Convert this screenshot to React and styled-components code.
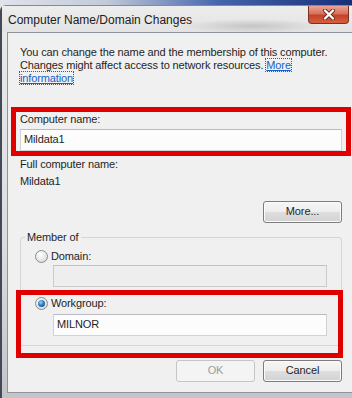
import React from "react";
import styled, { createGlobalStyle } from "styled-components";

const GlobalStyle = createGlobalStyle`
    body {
        margin: 0;
        font-family: "Liberation Sans", Arial, sans-serif;
    }
`;

const Screen = styled.div`
    width: 352px;
    height: 398px;
    overflow: hidden;
    display: flex;
    flex-direction: column;
    padding-top: 5px;
    box-sizing: border-box;
    background: linear-gradient(to right, #dfe3ea 0%, #c3cbd9 30%, #4565ad 62%, #162f78 100%);
`;

const Window = styled.div`
    flex: 1;
    display: flex;
    flex-direction: column;
    border-left: 2px solid #444a55;
    border-top: 1px solid #858b94;
    border-top-left-radius: 6px;
    background: linear-gradient(#e9e9ea 0%, #dcdddf 60%, #c2c4c7 100%);
`;

const TitleBar = styled.div`
    height: 26px;
    display: flex;
    align-items: flex-start;
    justify-content: space-between;
    padding-left: 6px;
    background:
        radial-gradient(ellipse 70px 7px at 250px 20px, rgba(110, 110, 110, 0.28), transparent),
        linear-gradient(#ededed, #e3e3e3);
`;

const Title = styled.div`
    margin-top: 6px;
    font-size: 12px;
    line-height: 16px;
    color: #202020;
`;

const CloseButton = styled.div`
    width: 41px;
    height: 18px;
    margin-right: 3px;
    box-sizing: border-box;
    display: flex;
    align-items: center;
    justify-content: center;
    border: 1px solid #7a3024;
    border-top: none;
    border-radius: 0 0 4px 4px;
    background: linear-gradient(#eaa597 0%, #d9705a 45%, #c2432b 55%, #d75f3f 100%);
`;

const Content = styled.div`
    flex: 1;
    display: flex;
    flex-direction: column;
    margin: 0 0 6px 5px;
    border-top: 1px solid #8e949b;
    border-left: 1px solid #8e949b;
    border-bottom: 1px solid #8e949b;
    background: #f0f0f0;
    padding: 13px 10px 10px 12px;
    font-size: 11px;
    line-height: 13px;
    letter-spacing: -0.12px;
    color: #1f1f1f;
`;

const Intro = styled.p`
    margin: 0;
    white-space: nowrap;
`;

const Link = styled.span`
    color: #1a5fc4;
    text-decoration: underline;
    border: 1px dotted #555;
    margin: -1px;
    -webkit-box-decoration-break: clone;
    box-decoration-break: clone;
`;

const Highlight = styled.div`
    display: flex;
    flex-direction: column;
    border: 5px solid #e00000;
    margin: ${(p) => p.margin};
    padding: ${(p) => p.padding};
`;

const Label = styled.div`
    margin-top: ${(p) => p.top || 0}px;
`;

const TextBox = styled.div`
    height: 22px;
    box-sizing: border-box;
    display: flex;
    align-items: center;
    padding-left: 3px;
    margin-top: ${(p) => p.top || 0}px;
    margin-left: ${(p) => (p.indent ? 18 : 0)}px;
    border: 1px solid ${(p) => (p.disabled ? "#c9cbcd" : "#cfd2d6")};
    border-top-color: ${(p) => (p.disabled ? "#bfc1c3" : "#b7bbc0")};
    background: ${(p) => (p.disabled ? "#eeeeee" : "#fcfcfc")};
    color: #1f1f1f;
`;

const Button = styled.div`
    width: 79px;
    height: 22px;
    box-sizing: border-box;
    display: flex;
    align-items: center;
    justify-content: center;
    border-radius: 3px;
    border: 1px solid ${(p) => (p.disabled ? "#c3c5c7" : "#7c7c7c")};
    background: ${(p) =>
        p.disabled
            ? "#f4f4f4"
            : "linear-gradient(#f6f6f6 0%, #eeeeee 48%, #dedede 52%, #d2d2d2 100%)"};
    color: ${(p) => (p.disabled ? "#9c9c9c" : "#1f1f1f")};
    box-shadow: inset 0 0 0 1px ${(p) => (p.disabled ? "transparent" : "#fbfbfb")};
`;

const MoreButton = styled(Button)`
    align-self: flex-end;
    margin-top: 12.5px;
`;

const GroupBox = styled.fieldset`
    margin: 8px 0 0;
    padding: 0;
    border: 1px solid #d3d6d9;
    border-radius: 3px;
    min-inline-size: 0;
`;

const Legend = styled.legend`
    margin-left: 4px;
    padding: 0 2px;
    font-size: 11px;
    line-height: 13px;
`;

const GroupBody = styled.div`
    display: flex;
    flex-direction: column;
    padding: 0 14px;
`;

const RadioRow = styled.div`
    display: flex;
    align-items: center;
    gap: 3px;
    height: 13px;
    margin-top: ${(p) => p.top || 0}px;
`;

const Radio = styled.span`
    width: 13px;
    height: 13px;
    box-sizing: border-box;
    border-radius: 50%;
    border: 1px solid #8a8c8e;
    background: radial-gradient(circle at 40% 35%, #ffffff 0%, #e6e6e6 55%, #cfcfcf 100%);
    display: flex;
    align-items: center;
    justify-content: center;
`;

const RadioDot = styled.span`
    width: 7px;
    height: 7px;
    border-radius: 50%;
    background: radial-gradient(circle at 40% 35%, #9fd2f5 0%, #2a7fc6 45%, #0d3f7a 100%);
`;

const ButtonRow = styled.div`
    display: flex;
    justify-content: flex-end;
    gap: 8px;
    margin-top: 14px;
`;

const CloseIcon = () => (
    <svg width="14" height="11" viewBox="0 0 14 11">
        <path d="M3 1.5 L11 9.5 M11 1.5 L3 9.5" stroke="#6a2418" strokeWidth="4" strokeLinecap="round" />
        <path d="M3 1.5 L11 9.5 M11 1.5 L3 9.5" stroke="#ffffff" strokeWidth="2.4" strokeLinecap="round" />
    </svg>
);

const App = () => {
    return (
        <>
            <GlobalStyle />
            <Screen>
                <Window>
                    <TitleBar>
                        <Title>Computer Name/Domain Changes</Title>
                        <CloseButton>
                            <CloseIcon />
                        </CloseButton>
                    </TitleBar>
                    <Content>
                        <Intro>
                            You can change the name and the membership of this computer.
                            <br />
                            Changes might affect access to network resources.{" "}
                            <Link>
                                More
                                <br />
                                information
                            </Link>
                        </Intro>

                        <Highlight margin="22px -9px 0" padding="1px 4px 0">
                            <Label>Computer name:</Label>
                            <TextBox top={2.5}>Mildata1</TextBox>
                        </Highlight>

                        <Label top={2.5}>Full computer name:</Label>
                        <Label top={4}>Mildata1</Label>

                        <MoreButton>More...</MoreButton>

                        <GroupBox>
                            <Legend>Member of</Legend>
                            <GroupBody>
                                <RadioRow top={6.5}>
                                    <Radio />
                                    Domain:
                                </RadioRow>
                                <TextBox indent disabled top={1.5} />

                                <Highlight margin="3px -16px -13px -19px" padding="2.5px 11px 17px 14px">
                                    <RadioRow>
                                        <Radio>
                                            <RadioDot />
                                        </Radio>
                                        Workgroup:
                                    </RadioRow>
                                    <TextBox indent top={3.5}>MILNOR</TextBox>
                                </Highlight>
                            </GroupBody>
                        </GroupBox>

                        <ButtonRow>
                            <Button disabled>OK</Button>
                            <Button>Cancel</Button>
                        </ButtonRow>
                    </Content>
                </Window>
            </Screen>
        </>
    );
};

export default App;
